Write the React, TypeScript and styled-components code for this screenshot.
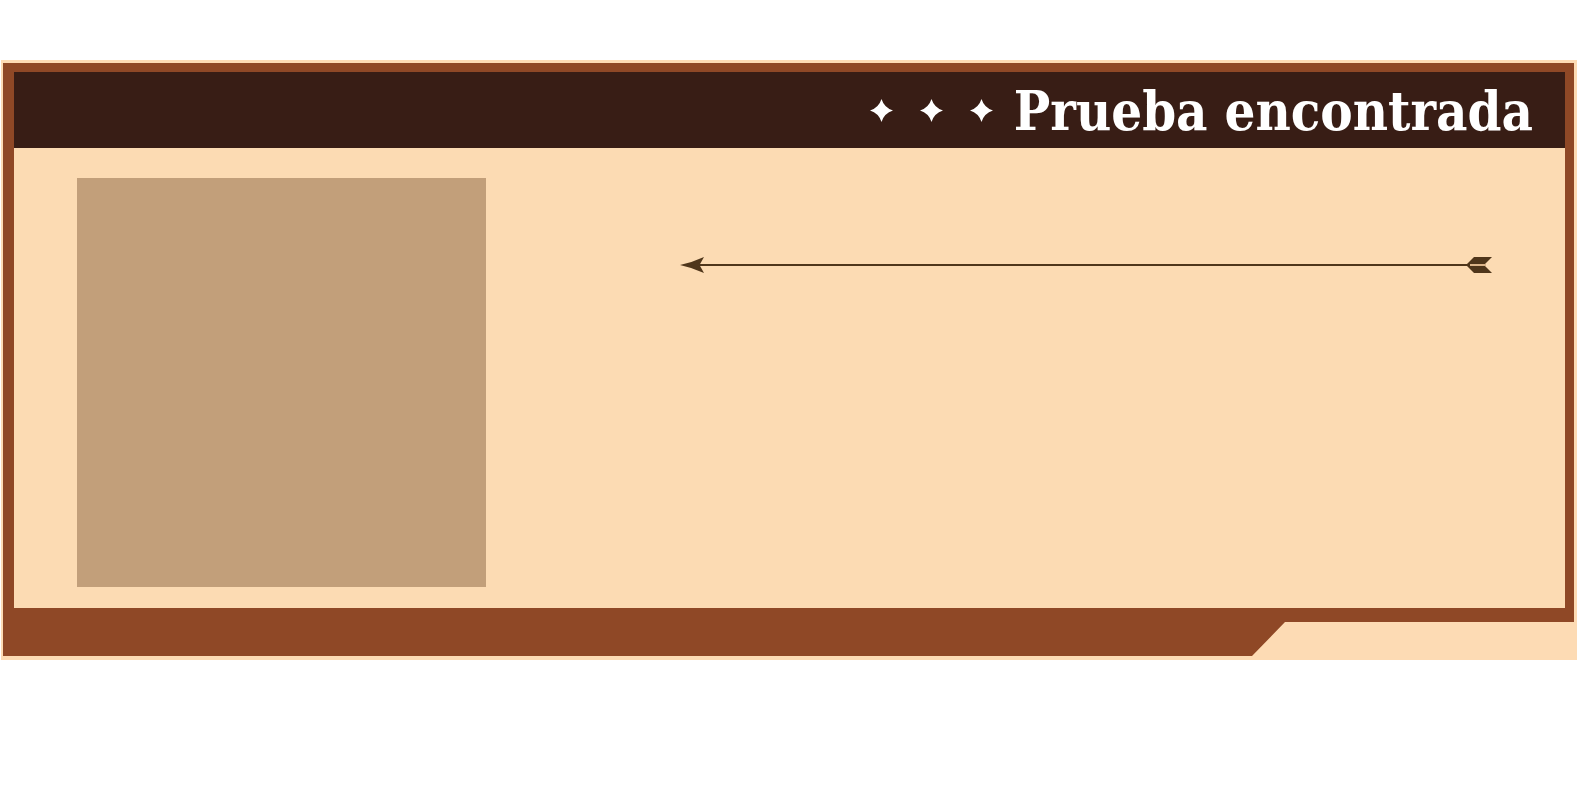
import React from 'react'
import styled, { createGlobalStyle } from 'styled-components'

const GlobalStyle = createGlobalStyle`
  html, body {
    margin: 0;
    padding: 0;
    background: #ffffff;
  }
`

const Page = styled.div`
  padding: 60px 0 0 1px;
`

const Frame = styled.div`
  width: 1571px;
  padding: 3px 3px 4px 2px;
  background: #fddbb4;
`

const Shell = styled.div`
  height: 593px;
  box-sizing: border-box;
  padding: 9px 9px 0 11px;
  background: #8f4826;
  clip-path: polygon(0 0, 100% 0, 100% 559px, 1282px 559px, 1249px 100%, 0 100%);
`

const Panel = styled.div`
  height: 536px;
  display: flex;
  flex-direction: column;
  background: #fcdbb3;
`

const Header = styled.div`
  height: 76px;
  display: flex;
  align-items: center;
  justify-content: flex-end;
  gap: 21px;
  padding-right: 32px;
  background: #381d15;
`

const Stars = styled.div`
  display: flex;
  gap: 27px;
`

const Star = styled.svg`
  width: 23px;
  height: 23px;
  display: block;
`

const Title = styled.h1`
  margin: 0;
  color: #ffffff;
  font-family: "DejaVu Serif Condensed", "DejaVu Serif", serif;
  font-stretch: condensed;
  font-weight: 700;
  font-size: 54px;
  line-height: 1;
  padding-top: 2px;
`

const Body = styled.div`
  flex: 1;
  display: flex;
  padding: 30px 0 0 63px;
`

const Portrait = styled.div`
  width: 409px;
  height: 409px;
  background: #c29f7a;
`

const ArrowWrap = styled.div`
  flex: 1;
  padding: 78px 0 0 194px;
`

const StarIcon = () => (
  <Star viewBox="0 0 22 22">
    <path d="M11 0 Q13.6 8.4 22 11 Q13.6 13.6 11 22 Q8.4 13.6 0 11 Q8.4 8.4 11 0 Z" fill="#ffffff" />
  </Star>
)

const Arrow = () => (
  <svg width="813" height="18" viewBox="0 0 813 18" style={{ display: 'block' }}>
    <path d="M0 9 Q12 6.5 24 1 L19.5 9 L24 17 Q12 11.5 0 9 Z" fill="#4f361b" />
    <rect x="18" y="8" width="772" height="2" fill="#4f361b" />
    <rect x="790" y="8" width="16" height="2" fill="#dcb58a" />
    <polygon points="787,8 794,1 812,1 805,8" fill="#4f361b" />
    <polygon points="787,10 794,17 812,17 805,10" fill="#4f361b" />
  </svg>
)

export default function App() {
  return (
    <Page>
      <GlobalStyle />
      <Frame>
        <Shell>
          <Panel>
            <Header>
              <Stars>
                <StarIcon />
                <StarIcon />
                <StarIcon />
              </Stars>
              <Title>Prueba encontrada</Title>
            </Header>
            <Body>
              <Portrait />
              <ArrowWrap>
                <Arrow />
              </ArrowWrap>
            </Body>
          </Panel>
        </Shell>
      </Frame>
    </Page>
  )
}
